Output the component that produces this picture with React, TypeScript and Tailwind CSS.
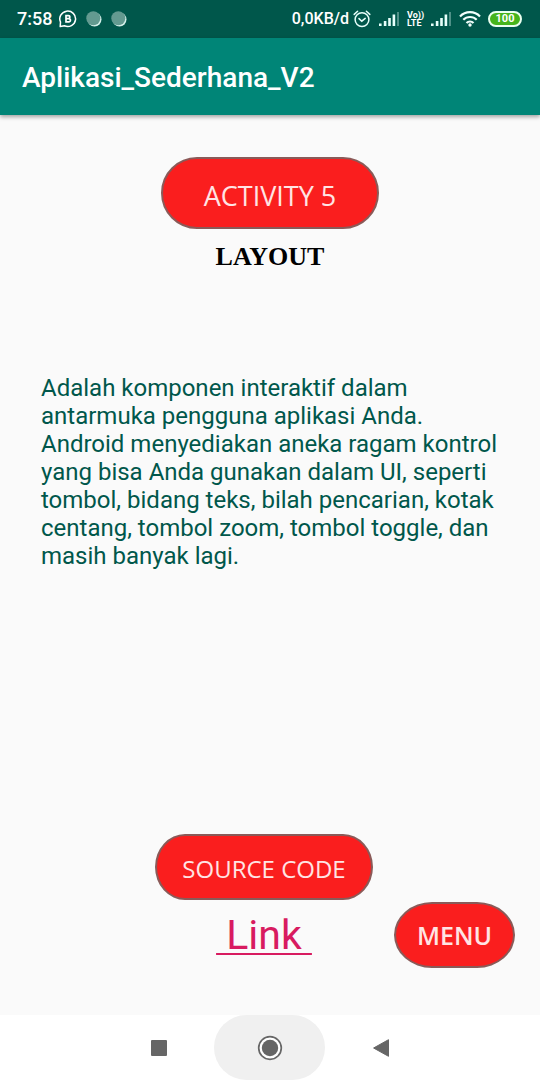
import type { ReactNode } from "react";

function ChatBadgeIcon() {
  return (
    <svg width="18" height="18" viewBox="0 0 18 18" fill="none" stroke="white" strokeWidth="1.5" aria-hidden="true">
      <path d="M1.2 16.6 1.5 12A7.9 7.7 0 1 1 5.4 15.8z" strokeLinejoin="round" />
      <path d="M7 5.6h2.4a1.5 1.5 0 0 1 0 3H7zM7 8.6h2.8a1.6 1.6 0 0 1 0 3.3H7z" strokeWidth="1.7" />
    </svg>
  );
}

function DotIcon() {
  return (
    <svg width="16" height="16" viewBox="0 0 16 16" aria-hidden="true">
      <circle cx="8.5" cy="8.5" r="7" fill="#d3efe9" />
      <circle cx="7.3" cy="7.3" r="7" fill="#639a90" />
    </svg>
  );
}

function AlarmIcon() {
  return (
    <svg width="18" height="18" viewBox="0 0 18 18" fill="none" stroke="#e6fffb" strokeWidth="1.5" strokeLinecap="round" aria-hidden="true">
      <circle cx="9" cy="9.6" r="6.9" />
      <path d="M1.2 4.4 4.6 1.3M16.8 4.4l-3.4-3.1M6 8.6l2.8 2.6 3.4-2.8" />
    </svg>
  );
}

function SignalIcon() {
  return (
    <svg width="20" height="16" viewBox="0 0 20 16" fill="#e6fffb" aria-hidden="true">
      <rect x="0" y="12.5" width="2.6" height="2.5" />
      <rect x="4.8" y="10" width="2.6" height="5" />
      <rect x="9.2" y="7" width="2.6" height="8" />
      <rect x="13.6" y="3.5" width="2.6" height="11.5" />
      <rect x="18" y="1" width="2" height="14" opacity="0.35" />
    </svg>
  );
}

function WifiIcon() {
  return (
    <svg width="22" height="16" viewBox="0 0 22 16" fill="none" stroke="#f2fffd" strokeWidth="2.2" aria-hidden="true">
      <path d="M1 5.4a14 14 0 0 1 20 0M4.3 8.8a9.4 9.4 0 0 1 13.4 0M7.5 12a5 5 0 0 1 7 0" />
      <circle cx="11" cy="14" r="1.7" fill="#f2fffd" stroke="none" />
    </svg>
  );
}

function StatusBar() {
  return (
    <div className="flex h-[38px] items-center justify-between bg-[#00574b] pr-[18px] pl-[17px] font-medium text-white">
      <div className="flex items-center">
        <span className="text-[18px] leading-5">7:58</span>
        <span className="ml-[7px] flex items-center gap-[9px]">
          <ChatBadgeIcon />
          <DotIcon />
          <DotIcon />
        </span>
      </div>
      <div className="flex items-center">
        <span className="text-[16px] leading-5">0,0KB/d</span>
        <span className="ml-1 flex items-center gap-2">
          <AlarmIcon />
          <SignalIcon />
          <span className="flex w-4 flex-col text-[9px] leading-2 font-bold">
            <span>Vo))</span>
            <span>LTE</span>
          </span>
          <SignalIcon />
          <WifiIcon />
        </span>
        <span className="ml-[7px] flex h-4 w-[34px] items-center justify-center rounded-full border-2 border-[#eafff0] bg-[#46b41c] text-[11px] leading-3 font-bold">
          100
        </span>
      </div>
    </div>
  );
}

function PillButton({ className, children }: { className: string; children: ReactNode }) {
  return (
    <button
      type="button"
      className={`border-2 border-[#8a5a58] bg-[#fa1e1e] font-['Open_Sans','Noto_Sans',sans-serif] text-[#ffe4e4] ${className}`}
    >
      {children}
    </button>
  );
}

function NavigationBar() {
  return (
    <nav className="flex h-[65px] items-stretch justify-center bg-white pr-px text-[#666666]">
      <button type="button" aria-label="Recent apps" className="flex w-[111px] items-center justify-center">
        <svg width="16" height="16" viewBox="0 0 16 16" fill="currentColor" aria-hidden="true">
          <rect width="16" height="16" rx="1" />
        </svg>
      </button>
      <button type="button" aria-label="Home" className="flex w-[111px] items-center justify-center rounded-full bg-[#f0f0f0]">
        <svg width="26" height="26" viewBox="0 0 26 26" aria-hidden="true">
          <circle cx="13" cy="13" r="11.3" fill="white" stroke="currentColor" strokeWidth="1.7" />
          <circle cx="13" cy="13" r="8.2" fill="currentColor" />
        </svg>
      </button>
      <button type="button" aria-label="Back" className="flex w-[111px] items-center justify-center">
        <svg width="16" height="18" viewBox="0 0 16 18" fill="currentColor" stroke="currentColor" strokeLinejoin="round" aria-hidden="true">
          <path d="M15.5.7v16.6L.6 9z" />
        </svg>
      </button>
    </nav>
  );
}

export default function App() {
  return (
    <div className="flex min-h-screen flex-col bg-[#fafafa] font-[Roboto,sans-serif]">
      <StatusBar />
      <header className="flex h-[77px] items-center bg-[#008577] px-[22px] pt-0.5 shadow-[0_2px_4px_rgba(0,0,0,0.35)]">
        <h1 className="text-[28px] leading-8 font-medium text-white">Aplikasi_Sederhana_V2</h1>
      </header>
      <main className="flex grow flex-col">
        <section className="flex flex-col items-center pt-[42px]">
          <PillButton className="h-[72px] w-[218px] rounded-full pt-1.5 text-[27px]">ACTIVITY 5</PillButton>
          <h2 className="mt-3 font-['Liberation_Serif',serif] text-[26px] leading-8 font-bold text-black">LAYOUT</h2>
        </section>
        <p className="mt-[101px] px-[41px] text-[24px] leading-7 text-[#00574b]">
          Adalah komponen interaktif dalam antarmuka pengguna aplikasi Anda. Android menyediakan aneka ragam kontrol
          yang bisa Anda gunakan dalam UI, seperti tombol, bidang teks, bilah pencarian, kotak centang, tombol zoom,
          tombol toggle, dan masih banyak lagi.
        </p>
        <section className="mt-auto grid grid-cols-[1fr_218px_1fr] pr-[25px] pb-[47px] pl-[13px]">
          <div className="col-start-2 flex flex-col items-center pb-[9px]">
            <PillButton className="h-[66px] w-full rounded-[30px/33px] pt-1 text-[24px]">SOURCE CODE</PillButton>
            <a
              href="#link"
              className="mt-[11px] text-[41px] leading-12 whitespace-pre text-[#d81b60] underline decoration-2 underline-offset-4"
            >
              {" Link "}
            </a>
          </div>
          <PillButton className="h-[66px] w-[121px] self-end justify-self-end rounded-[38px/33px] pt-0.5 text-[25px] font-semibold">
            MENU
          </PillButton>
        </section>
      </main>
      <NavigationBar />
    </div>
  );
}
